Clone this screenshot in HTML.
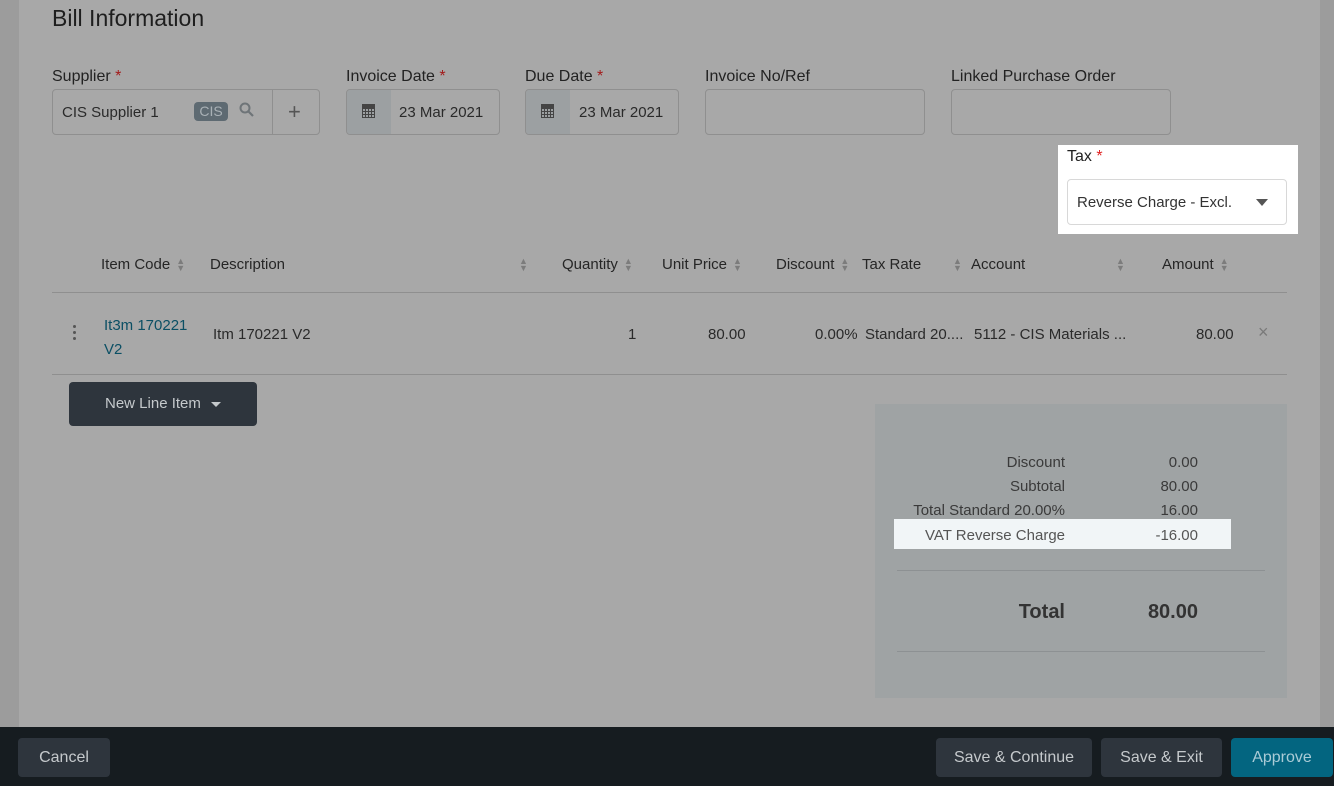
<!DOCTYPE html>
<html><head><style>
*{box-sizing:border-box;margin:0;padding:0}
body{width:1334px;height:786px;overflow:hidden;background:#9c9c9c;font-family:"Liberation Sans",sans-serif;color:#262626;position:relative}
.a{position:absolute}
.card{left:19px;top:0;width:1301px;height:727px;background:#a8a8a8}
.lbl{font-size:16px;color:#222}
.req{color:#a31a1a}
.box{border:1px solid #8f8f8f;border-radius:4px;height:46px}
.t{font-size:15px;color:#2a2a2a}
.th{font-size:15px;color:#262626;top:256px}
.ar{color:#7c7c7c;font-size:9px;line-height:7px;display:inline-block;vertical-align:middle;margin-left:6px}
.btn{border-radius:4px;color:#c5c9cc;font-size:16px;text-align:center;line-height:40px;height:39px;top:738px;background:#2e353d}
.sr{font-size:15px;color:#3a3a3a;text-align:right}
.cal{width:13px;height:14px;border:1.5px solid #444;border-top-width:4px;background:repeating-linear-gradient(90deg,transparent 0 2px,#444 2px 3px),repeating-linear-gradient(0deg,transparent 0 2px,#444 2px 3px)}
</style></head><body>
<div class="a card"></div>
<div class="a" style="left:52px;top:5px;font-size:23px;color:#1e1e1e">Bill Information</div>

<div class="a lbl" style="left:52px;top:68px">Supplier <span class="req">*</span></div>
<div class="a box" style="left:52px;top:89px;width:268px"></div>
<div class="a" style="left:272px;top:89px;width:1px;height:46px;background:#8f8f8f"></div>
<div class="a t" style="left:62px;top:104px">CIS Supplier 1</div>
<div class="a" style="left:194px;top:102px;width:34px;height:19px;background:#5e6a72;border-radius:4px;color:#a9b1b6;font-size:14px;text-align:center;line-height:19px">CIS</div>
<svg class="a" style="left:239px;top:102px" width="16" height="16"><circle cx="6" cy="6" r="4.5" fill="none" stroke="#6e7478" stroke-width="2"/><path d="M9 9l5 5" stroke="#6e7478" stroke-width="2.2"/></svg>
<div class="a" style="left:288px;top:99px;font-size:22px;color:#555">+</div>

<div class="a lbl" style="left:346px;top:68px">Invoice Date <span class="req">*</span></div>
<div class="a box" style="left:346px;top:89px;width:154px;overflow:hidden"><div style="width:44px;height:100%;background:#9ca0a2"></div></div>
<div class="a cal" style="left:362px;top:104px"></div>
<div class="a t" style="left:399px;top:104px">23 Mar 2021</div>

<div class="a lbl" style="left:525px;top:68px">Due Date <span class="req">*</span></div>
<div class="a box" style="left:525px;top:89px;width:154px;overflow:hidden"><div style="width:44px;height:100%;background:#9ca0a2"></div></div>
<div class="a cal" style="left:541px;top:104px"></div>
<div class="a t" style="left:579px;top:104px">23 Mar 2021</div>

<div class="a lbl" style="left:705px;top:68px">Invoice No/Ref</div>
<div class="a box" style="left:705px;top:89px;width:220px"></div>
<div class="a lbl" style="left:951px;top:68px">Linked Purchase Order</div>
<div class="a box" style="left:951px;top:89px;width:220px"></div>

<div class="a" style="left:1058px;top:145px;width:240px;height:89px;background:#fff"></div>
<div class="a lbl" style="left:1067px;top:148px">Tax <span style="color:#e02020">*</span></div>
<div class="a" style="left:1067px;top:179px;width:220px;height:46px;border:1px solid #d8d8d8;border-radius:4px"></div>
<div class="a t" style="left:1077px;top:194px;color:#333">Reverse Charge - Excl.</div>
<div class="a" style="left:1256px;top:199px;border-left:6px solid transparent;border-right:6px solid transparent;border-top:7px solid #555"></div>

<div class="a th" style="left:101px">Item Code<span class="ar">▲<br>▼</span></div>
<div class="a th" style="left:210px">Description</div>
<div class="a th" style="left:513px"><span class="ar">▲<br>▼</span></div>
<div class="a th" style="left:562px">Quantity<span class="ar">▲<br>▼</span></div>
<div class="a th" style="left:662px">Unit Price<span class="ar">▲<br>▼</span></div>
<div class="a th" style="left:776px">Discount<span class="ar">▲<br>▼</span></div>
<div class="a th" style="left:862px">Tax Rate</div>
<div class="a th" style="left:947px"><span class="ar">▲<br>▼</span></div>
<div class="a th" style="left:971px">Account</div>
<div class="a th" style="left:1110px"><span class="ar">▲<br>▼</span></div>
<div class="a th" style="left:1162px">Amount<span class="ar">▲<br>▼</span></div>
<div class="a" style="left:52px;top:292px;width:1235px;height:1px;background:#8f8f8f"></div>
<div class="a" style="left:52px;top:374px;width:1235px;height:1px;background:#8f8f8f"></div>

<div class="a" style="left:73px;top:325px;width:3px;height:3px;background:#555;box-shadow:0 6px 0 #555,0 12px 0 #555;border-radius:50%"></div>
<div class="a t" style="left:104px;top:314px;color:#0b4f64;line-height:24px">It3m 170221<br>V2</div>
<div class="a t" style="left:213px;top:326px">Itm 170221 V2</div>
<div class="a t" style="left:628px;top:326px">1</div>
<div class="a t" style="left:708px;top:326px">80.00</div>
<div class="a t" style="left:815px;top:326px">0.00%</div>
<div class="a t" style="left:865px;top:326px">Standard 20....</div>
<div class="a t" style="left:974px;top:326px">5112 - CIS Materials ...</div>
<div class="a t" style="left:1196px;top:326px">80.00</div>
<div class="a" style="left:1258px;top:322px;color:#7a7a7a;font-size:18px">×</div>

<div class="a" style="left:69px;top:382px;width:188px;height:44px;background:#2e353d;border-radius:4px;color:#c5c9cc;font-size:15px;line-height:44px;padding-left:36px">New Line Item <span style="display:inline-block;margin-left:6px;border-left:5px solid transparent;border-right:5px solid transparent;border-top:5px solid #c5c9cc;vertical-align:middle"></span></div>

<div class="a" style="left:875px;top:404px;width:412px;height:294px;background:#9fa3a4"></div>
<div class="a" style="left:894px;top:519px;width:337px;height:30px;background:#f1f5f7"></div>
<div class="a sr" style="left:880px;top:454px;width:185px">Discount</div>
<div class="a sr" style="left:1100px;top:454px;width:98px">0.00</div>
<div class="a sr" style="left:880px;top:478px;width:185px">Subtotal</div>
<div class="a sr" style="left:1100px;top:478px;width:98px">80.00</div>
<div class="a sr" style="left:880px;top:502px;width:185px">Total Standard 20.00%</div>
<div class="a sr" style="left:1100px;top:502px;width:98px">16.00</div>
<div class="a sr" style="left:880px;top:527px;width:185px;color:#555">VAT Reverse Charge</div>
<div class="a sr" style="left:1100px;top:527px;width:98px;color:#555">-16.00</div>
<div class="a" style="left:897px;top:570px;width:368px;height:1px;background:#8d9193"></div>
<div class="a sr" style="left:880px;top:601px;width:185px;font-size:20px;font-weight:bold;color:#333">Total</div>
<div class="a sr" style="left:1080px;top:601px;width:118px;font-size:20px;font-weight:bold;color:#333">80.00</div>
<div class="a" style="left:897px;top:651px;width:368px;height:1px;background:#8d9193"></div>

<div class="a" style="left:0;top:727px;width:1334px;height:59px;background:#161c20"></div>
<div class="a btn" style="left:18px;width:92px">Cancel</div>
<div class="a btn" style="left:936px;width:156px">Save &amp; Continue</div>
<div class="a btn" style="left:1101px;width:121px">Save &amp; Exit</div>
<div class="a btn" style="left:1231px;width:102px;background:#036580;color:#aacbd6">Approve</div>
</body></html>
